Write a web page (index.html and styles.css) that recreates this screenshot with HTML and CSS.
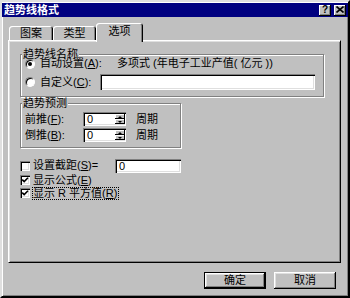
FILE: index.html
```html
<!DOCTYPE html>
<html lang="zh-CN">
<head>
    <meta charset="UTF-8">
    <title>趋势线格式</title>
    <link rel="stylesheet" href="styles.css">
</head>
<body>

<div class="window">
    <div class="titlebar">
        <span class="title">趋势线格式</span>
        <div class="title-buttons">
            <span class="tbtn help">?</span>
            <span class="tbtn close">
                <svg width="8" height="7" viewBox="0 0 8 7"><path d="M0.5 0.5 L7.5 6.5 M7.5 0.5 L0.5 6.5" stroke="#000" stroke-width="1.6"/></svg>
            </span>
        </div>
    </div>

    <div class="tabs">
        <div class="tab">图案</div>
        <div class="tab">类型</div>
        <div class="tab active">选项</div>
    </div>

    <div class="panel">
        <!-- trendline name -->
        <div class="group group-name">
            <div class="group-title">趋势线名称</div>
            <div class="row row-auto">
                <span class="radio"><span class="dot"></span></span>
                <span class="label w-auto">自动设置(<u>A</u>):</span>
                <span class="label">多项式 (年电子工业产值( 亿元 ))</span>
            </div>
            <div class="row row-custom">
                <span class="radio"></span>
                <span class="label w-custom">自定义(<u>C</u>):</span>
                <span class="field name-field"></span>
            </div>
        </div>

        <!-- forecast -->
        <div class="group group-forecast">
            <div class="group-title">趋势预测</div>
            <div class="row spin-row first">
                <span class="label w-spin">前推(<u>F</u>):</span>
                <span class="field spin">
                    <span class="val">0</span>
                    <span class="spin-btns"><span class="sb"><i class="up"></i></span><span class="sb"><i class="down"></i></span></span>
                </span>
                <span class="label unit">周期</span>
            </div>
            <div class="row spin-row">
                <span class="label w-spin">倒推(<u>B</u>):</span>
                <span class="field spin">
                    <span class="val">0</span>
                    <span class="spin-btns"><span class="sb"><i class="up"></i></span><span class="sb"><i class="down"></i></span></span>
                </span>
                <span class="label unit">周期</span>
            </div>
        </div>

        <!-- options -->
        <div class="checks">
            <div class="row check-row r1">
                <span class="checkbox"></span>
                <span class="label w-icpt">设置截距(<u>S</u>)=</span>
                <span class="field icpt"><span class="val">0</span></span>
            </div>
            <div class="row check-row r2">
                <span class="checkbox"><svg width="10" height="10" viewBox="0 0 10 10"><path d="M2.2 4.6 L4.2 6.6 L8 2.8" fill="none" stroke="#000" stroke-width="1.6"/></svg></span>
                <span class="label">显示公式(<u>E</u>)</span>
            </div>
            <div class="row check-row r3">
                <span class="checkbox"><svg width="10" height="10" viewBox="0 0 10 10"><path d="M2.2 4.6 L4.2 6.6 L8 2.8" fill="none" stroke="#000" stroke-width="1.6"/></svg></span>
                <span class="label focus">显示 R 平方值(<u>R</u>)</span>
            </div>
        </div>
    </div>

    <div class="buttons">
        <span class="btn default">确定</span>
        <span class="btn">取消</span>
    </div>
</div>

</body>
</html>
```

FILE: styles.css
```css
* {
    box-sizing: border-box;
}

body {
    margin: 0;
    background-color: #c0c0c0;
    font-family: "Liberation Sans", "Noto Sans CJK SC", sans-serif;
    font-size: 11px;
    color: #000;
}

u {
    text-decoration: underline;
    text-underline-offset: 1px;
}

.window {
    width: 350px;
    height: 298px;
    padding: 1px 0 0;
    border: 2px solid;
    border-color: #dfdfdf #000 #000 #dfdfdf;
    box-shadow: inset 1px 1px #fff, inset -1px -1px #808080;
    background-color: #c0c0c0;
}

/* title bar */
.titlebar {
    height: 14px;
    background-color: #000080;
    display: flex;
    align-items: center;
    justify-content: space-between;
    padding: 0 2px 0 2px;
}

.title {
    color: #fff;
    font-weight: bold;
    font-size: 11px;
    line-height: 14px;
}

.title-buttons {
    display: flex;
    gap: 3px;
}

.tbtn {
    width: 12px;
    height: 11px;
    background-color: #c0c0c0;
    box-shadow: inset -1px -1px #000, inset 1px 1px #fff, inset -2px -2px #808080;
    display: flex;
    align-items: center;
    justify-content: center;
    font-weight: bold;
    font-size: 10px;
    line-height: 10px;
    padding-bottom: 1px;
}

.tbtn svg {
    display: block;
}

/* tabs */
.tabs {
    display: flex;
    align-items: flex-end;
    height: 17px;
    margin: 6px 0 0 7px;
}

.tab {
    width: 44px;
    height: 14px;
    line-height: 14px;
    text-align: center;
    border-radius: 3px 3px 0 0;
    box-shadow: inset 1px 1px #fff, inset -1px 0 #000, inset -2px 0 #808080;
    background-color: #c0c0c0;
}

.tab:nth-child(2) {
    width: 43px;
}

.tab.active {
    width: 47px;
    height: 19px;
    padding-top: 1px;
    margin-bottom: -2px;
    position: relative;
    z-index: 1;
}

/* tab page */
.panel {
    width: 333px;
    height: 223px;
    margin-left: 6px;
    padding: 13px 0 0 11px;
    border: 1px solid;
    border-color: #fff #000 #000 #fff;
    box-shadow: inset 1px 1px #dfdfdf, inset -1px -1px #808080;
}

.group {
    border: 1px solid #808080;
    box-shadow: inset 1px 1px #fff, 1px 1px #fff;
}

.group-title {
    width: fit-content;
    margin: -6px 0 -4px 1px;
    padding: 0 1px;
    line-height: 10px;
    background-color: #c0c0c0;
}

.row {
    display: flex;
    align-items: center;
    white-space: nowrap;
}

.group-name {
    width: 304px;
    padding-bottom: 6px;
}

.group-name .row {
    padding-left: 4px;
}

.row-auto {
    height: 15px;
    margin-top: 1px;
}

.row-custom {
    height: 16px;
    margin-top: 3px;
}

.label {
    display: block;
    line-height: 11px;
}

.w-auto {
    width: 77px;
}

.w-custom {
    width: 60px;
}

.radio {
    width: 10px;
    height: 10px;
    margin-right: 5px;
    border-radius: 50%;
    border: 1px solid;
    border-color: #808080 #fff #fff #808080;
    box-shadow: inset 1px 1px #000;
    background-color: #fff;
    display: flex;
    align-items: center;
    justify-content: center;
}

.dot {
    width: 4px;
    height: 4px;
    border-radius: 50%;
    background-color: #000;
}

.field {
    display: flex;
    align-items: center;
    background-color: #fff;
    box-shadow: inset 1px 1px #808080, inset 2px 2px #000, inset -1px -1px #fff, inset -2px -2px #dfdfdf;
}

.name-field {
    width: 215px;
    height: 16px;
}

/* forecast */
.group-forecast {
    width: 161px;
    margin-top: 6px;
    padding-bottom: 5px;
}

.spin-row {
    height: 14px;
    margin: 2px 0 0 4px;
}

.spin-row.first {
    margin-top: 8px;
}

.w-spin {
    width: 58px;
}

.spin {
    width: 43px;
    height: 14px;
    padding: 2px 1px 2px 4px;
    justify-content: space-between;
}

.val {
    line-height: 10px;
}

.spin-btns {
    display: flex;
    flex-direction: column;
    width: 10px;
    height: 10px;
}

.sb {
    flex: 1;
    display: flex;
    align-items: center;
    justify-content: center;
    background-color: #c0c0c0;
    box-shadow: inset -1px -1px #000, inset 1px 1px #fff;
}

.sb i {
    width: 0;
    height: 0;
    border-left: 2px solid transparent;
    border-right: 2px solid transparent;
}

.sb .up {
    border-bottom: 2px solid #000;
}

.sb .down {
    border-top: 2px solid #000;
}

.unit {
    margin-left: 10px;
}

/* checkboxes */
.checks {
    margin-top: 10px;
}

.checkbox {
    width: 10px;
    height: 10px;
    margin-right: 3px;
    background-color: #fff;
    box-shadow: inset 1px 1px #808080, inset 2px 2px #000, inset -1px -1px #fff, inset -2px -2px #dfdfdf;
}

.checkbox svg {
    display: block;
}

.r1 {
    height: 15px;
}

.r2 {
    height: 14px;
}

.r3 {
    height: 12px;
}

.w-icpt {
    width: 82px;
}

.icpt {
    width: 66px;
    height: 14px;
    padding: 2px 4px;
}

.label.focus {
    margin-left: -1px;
    padding: 0 1px 0 0;
    line-height: 11px;
    border: 1px dotted #000;
}

/* dialog buttons */
.buttons {
    display: flex;
    justify-content: flex-end;
    gap: 8px;
    margin-top: 9px;
    padding-right: 12px;
}

.btn {
    width: 62px;
    height: 17px;
    line-height: 17px;
    text-align: center;
    background-color: #c0c0c0;
    box-shadow: inset -1px -1px #000, inset 1px 1px #fff, inset -2px -2px #808080, inset 2px 2px #dfdfdf;
}

.btn.default {
    border: 1px solid #000;
    line-height: 15px;
}
```
